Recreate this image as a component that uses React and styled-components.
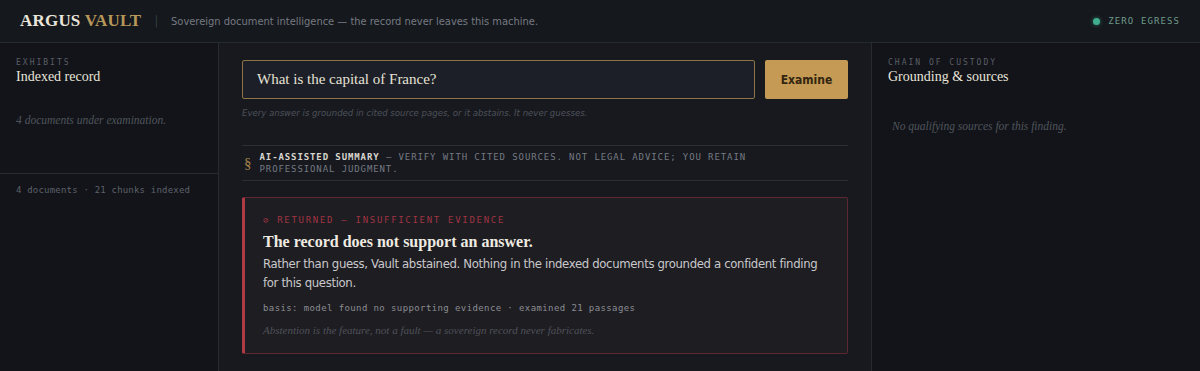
import styled, { createGlobalStyle } from 'styled-components'

const GlobalStyle = createGlobalStyle`
  html, body {
    margin: 0;
    padding: 0;
    background: #16191e;
  }
  * {
    box-sizing: border-box;
  }
`

const serif = `'Liberation Serif', 'Times New Roman', serif`
const sans = `'DejaVu Sans Condensed', 'Liberation Sans', sans-serif`
const mono = `'DejaVu Sans Mono', 'Liberation Mono', monospace`

const App = () => {
  return (
    <>
      <GlobalStyle />
      <Page>
        <Header>
          <Brand>
            <BrandName>
              ARGUS <Gold>VAULT</Gold>
            </BrandName>
            <Separator>|</Separator>
            <Tagline>Sovereign document intelligence — the record never leaves this machine.</Tagline>
          </Brand>
          <Egress>
            <Dot />
            ZERO EGRESS
          </Egress>
        </Header>
        <Columns>
          <LeftPanel>
            <PanelHead>
              <Eyebrow>EXHIBITS</Eyebrow>
              <PanelTitle>Indexed record</PanelTitle>
              <Muted $top={29}>4 documents under examination.</Muted>
            </PanelHead>
            <PanelFoot>4 documents · 21 chunks indexed</PanelFoot>
          </LeftPanel>

          <Main>
            <AskRow>
              <Query>What is the capital of France?</Query>
              <ExamineButton>Examine</ExamineButton>
            </AskRow>
            <Hint>Every answer is grounded in cited source pages, or it abstains. It never guesses.</Hint>

            <Disclaimer>
              <Section>§</Section>
              <DisclaimerText>
                <strong>AI-ASSISTED SUMMARY</strong>
                <span> — VERIFY WITH CITED SOURCES. NOT LEGAL ADVICE; YOU RETAIN</span>
                <br />
                <span>PROFESSIONAL JUDGMENT.</span>
              </DisclaimerText>
            </Disclaimer>

            <Finding>
              <FindingLabel>⊘ RETURNED — INSUFFICIENT EVIDENCE</FindingLabel>
              <FindingTitle>The record does not support an answer.</FindingTitle>
              <FindingBody>
                Rather than guess, Vault abstained. Nothing in the indexed documents grounded a confident finding
                for this question.
              </FindingBody>
              <Basis>basis: model found no supporting evidence · examined 21 passages</Basis>
              <Footnote>Abstention is the feature, not a fault — a sovereign record never fabricates.</Footnote>
            </Finding>
          </Main>

          <RightPanel>
            <Eyebrow>CHAIN OF CUSTODY</Eyebrow>
            <PanelTitle>Grounding &amp; sources</PanelTitle>
            <Muted $top={35} $indent={4}>No qualifying sources for this finding.</Muted>
          </RightPanel>
        </Columns>
      </Page>
    </>
  )
}

export default App

const Page = styled.div`
  width: 1200px;
  height: 371px;
  overflow: hidden;
  display: flex;
  flex-direction: column;
  background: #16191e;
`

const Header = styled.header`
  height: 43px;
  flex-shrink: 0;
  display: flex;
  align-items: center;
  justify-content: space-between;
  padding: 0 20px;
  background: #15181d;
  border-bottom: 1px solid #262a31;
`

const Brand = styled.div`
  display: flex;
  align-items: center;
`

const BrandName = styled.div`
  font-family: ${serif};
  font-weight: 700;
  font-size: 17px;
  letter-spacing: 0.2px;
  color: #e9e5da;
`

const Gold = styled.span`
  color: #b8975a;
`

const Separator = styled.span`
  margin: 0 13px;
  color: #3a3e46;
  font-family: ${sans};
  font-size: 12px;
`

const Tagline = styled.span`
  font-family: ${sans};
  font-size: 11px;
  color: #767a82;
`

const Egress = styled.div`
  display: flex;
  align-items: center;
  gap: 8px;
  font-family: ${mono};
  font-size: 9px;
  letter-spacing: 1.1px;
  color: #6f9a8a;
`

const Dot = styled.span`
  width: 7px;
  height: 7px;
  border-radius: 50%;
  background: #3fae8c;
  box-shadow: 0 0 4px rgba(63, 174, 140, 0.6);
`

const Columns = styled.div`
  flex: 1;
  display: grid;
  grid-template-columns: 219px 1fr 329px;
  min-height: 0;
`

const LeftPanel = styled.aside`
  background: #121419;
  border-right: 1px solid #262a31;
  display: flex;
  flex-direction: column;
`

const PanelHead = styled.div`
  padding: 14px 16px 0;
  height: 131px;
  border-bottom: 1px solid #262a31;
`

const PanelFoot = styled.div`
  padding: 11px 16px;
  font-family: ${mono};
  font-size: 9px;
  letter-spacing: 0.2px;
  color: #5d6169;
`

const RightPanel = styled.aside`
  background: #121419;
  border-left: 1px solid #262a31;
  padding: 14px 16px;
`

const Eyebrow = styled.div`
  font-family: ${mono};
  font-size: 8px;
  letter-spacing: 2px;
  color: #5b5f67;
  line-height: 11px;
`

const PanelTitle = styled.div`
  margin-top: 1px;
  font-family: ${serif};
  font-size: 14px;
  color: #e8e4d9;
`

const Muted = styled.div`
  margin-top: ${(p) => p.$top}px;
  padding-left: ${(p) => p.$indent || 0}px;
  font-family: ${serif};
  font-style: italic;
  font-size: 11.5px;
  color: #50545c;
`

const Main = styled.main`
  padding: 17px 23px 0;
  background: #17191f;
  min-width: 0;
`

const AskRow = styled.div`
  display: flex;
  gap: 10px;
  height: 39px;
`

const Query = styled.div`
  flex: 1;
  display: flex;
  align-items: center;
  padding: 0 14px;
  background: #1c1f27;
  border: 1px solid #8c7447;
  border-radius: 2px;
  font-family: ${serif};
  font-size: 15px;
  color: #e6e2d6;
`

const ExamineButton = styled.button`
  width: 83px;
  border: none;
  border-radius: 2px;
  background: #c49a55;
  color: #33260f;
  font-family: ${sans};
  font-weight: 700;
  font-size: 12px;
  cursor: pointer;
`

const Hint = styled.div`
  margin-top: 8px;
  font-family: ${sans};
  font-style: italic;
  font-size: 9.5px;
  color: #4d5159;
`

const Disclaimer = styled.div`
  margin-top: 27px;
  display: flex;
  align-items: center;
  gap: 8px;
  padding: 6px 0 5px;
  border-top: 1px solid #2a2e35;
  border-bottom: 1px solid #2a2e35;
`

const Section = styled.span`
  font-family: ${serif};
  font-size: 15px;
  color: #a8864c;
  padding-left: 2px;
`

const DisclaimerText = styled.div`
  font-family: ${mono};
  font-size: 9px;
  line-height: 11.5px;
  letter-spacing: 0.9px;
  color: #767a82;
  strong {
    color: #d9d6cf;
    font-weight: 700;
  }
`

const Finding = styled.section`
  margin-top: 16px;
  padding: 16px 20px 16px 18px;
  background: #1e1d22;
  border: 1px solid #5e2731;
  border-left: 3px solid #b13a47;
  border-radius: 2px;
`

const FindingLabel = styled.div`
  font-family: ${mono};
  font-size: 9px;
  line-height: 12px;
  letter-spacing: 1.7px;
  color: #a03442;
`

const FindingTitle = styled.h2`
  margin: 6px 0 0;
  font-family: ${serif};
  font-weight: 700;
  font-size: 16px;
  line-height: 20px;
  color: #efebe1;
`

const FindingBody = styled.p`
  margin: 2px 0 0;
  max-width: 570px;
  font-family: ${sans};
  font-size: 13px;
  letter-spacing: -0.35px;
  line-height: 19px;
  color: #c9c8cb;
`

const Basis = styled.div`
  margin-top: 10px;
  font-family: ${mono};
  font-size: 9px;
  line-height: 12px;
  letter-spacing: 0.4px;
  color: #8b8d93;
`

const Footnote = styled.div`
  margin-top: 9px;
  font-family: ${serif};
  font-style: italic;
  font-size: 11px;
  line-height: 14px;
  color: #4f5159;
`
